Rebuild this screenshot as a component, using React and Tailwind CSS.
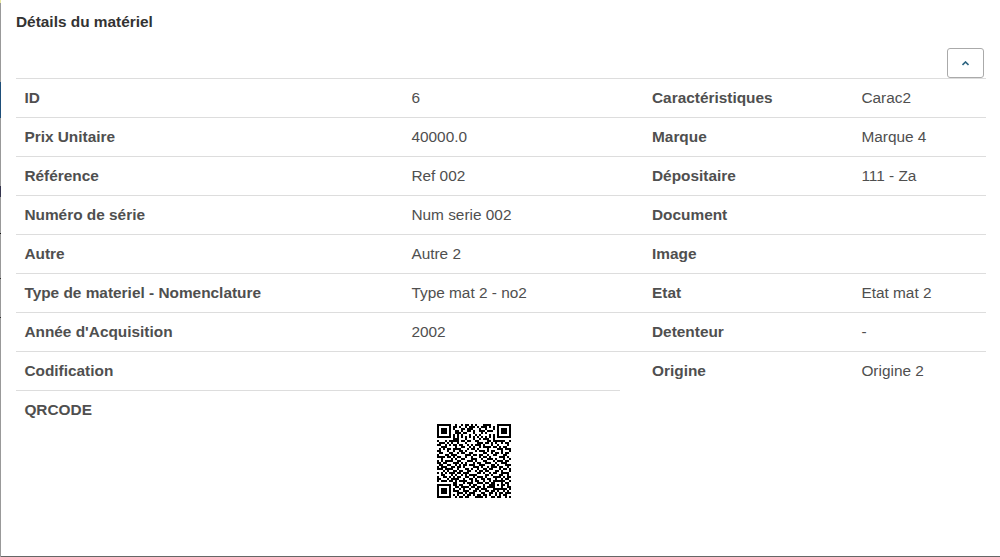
const details = [
  ['ID', '6'],
  ['Prix Unitaire', '40000.0'],
  ['Référence', 'Ref 002'],
  ['Numéro de série', 'Num serie 002'],
  ['Autre', 'Autre 2'],
  ['Type de materiel - Nomenclature', 'Type mat 2 - no2'],
  ["Année d'Acquisition", '2002'],
  ['Codification', ''],
];

const attributes = [
  ['Caractéristiques', 'Carac2'],
  ['Marque', 'Marque 4'],
  ['Dépositaire', '111 - Za'],
  ['Document', ''],
  ['Image', ''],
  ['Etat', 'Etat mat 2'],
  ['Detenteur', '-'],
  ['Origine', 'Origine 2'],
];

const modules = [
  '1111111001001011010100011110001111111',
  '1000001011010010111010111010101000001',
  '1011101010001101110001001000101011101',
  '1011101001101001101001110111001011101',
  '1011101001110110001000101000001011101',
  '1000001010101000100101000010101000001',
  '1111111010101010101010101010101111111',
  '0000000011100010001001011100100000000',
  '1000101111101101100110000110111111001',
  '0111010100100010000011101101010010110',
  '1100101011011001010111010001001000010',
  '0011100001001100101001011110110101100',
  '0101011011110001011010000100001110111',
  '1100010010011010000101110101100010001',
  '0110001100101100110000011001011010110',
  '1000110111000011101101100100110001100',
  '1111011010110010010001011010000111010',
  '0010000101001100011100100111010001001',
  '1010111100110001110100011000101110110',
  '1101100011101010001011001110010011100',
  '0110011001010110111001110001101000111',
  '1011100110110100001110100101110110010',
  '1110111100100011010010011011000101101',
  '0001010011011001100101101100011010001',
  '1010101110110111000011010010110011110',
  '0011000101001010111100001101000110010',
  '1001101010110011001011101000111101011',
  '1100010111100100110100110110010010110',
  '1011101101011110010110010010111111001',
  '0000000011000101110011101101100010110',
  '1111111011011000101100010011101011010',
  '1000001001101111011011010111100010011',
  '1011101010010100100110111000111111101',
  '1011101011100111001101001101101001010',
  '1011101000111010111000110011010110111',
  '1000001010100101101011011010010101100',
  '1111111001011011000111101001101100101',
];

function QrCode() {
  return (
    <svg width="74" height="74" viewBox="0 0 37 37" shapeRendering="crispEdges" role="img" aria-label="QRCODE">
      {modules.flatMap((row, y) =>
        [...row].map((bit, x) => (bit === '1' ? <rect key={`${x}-${y}`} x={x} y={y} width="1" height="1" /> : null))
      )}
    </svg>
  );
}

function Row({ label, value, columns }) {
  return (
    <div className={`grid h-[39px] border-t border-[#dddddd] pt-2 leading-[21px] ${columns}`}>
      <dt className="font-bold">{label}</dt>
      <dd>{value}</dd>
    </div>
  );
}

export default function App() {
  return (
    <div className="flex h-[557px] w-[1000px] overflow-hidden bg-white font-['Liberation_Sans',Arial,sans-serif] text-[15.4px] text-[#4f4f4f]">
      <div className="flex w-px shrink-0 flex-col bg-[#999999]">
        <div className="h-[3px] bg-[#e8e8a0]" />
        <div className="mt-[79px] h-9 bg-[#1e4e79]" />
        <div className="mt-[68px] h-[11px] bg-[#33334d]" />
        <div className="mt-[36px] h-px bg-[#111111]" />
        <div className="mt-[44px] h-px bg-[#333333]" />
        <div className="mt-[38px] h-px bg-[#333333]" />
      </div>
      <main className="flex min-w-0 flex-1 flex-col border-b border-[#666666] pl-[15px]">
        <h1 className="h-12 pt-3 leading-5 font-bold text-[#333333]">Détails du matériel</h1>
        <div className="flex h-[30px] justify-end pr-4">
          <button aria-label="Réduire" className="flex h-[30px] w-[37px] items-center justify-center rounded-[3px] border border-[#aaaaaa] bg-white">
            <svg width="7" height="5" viewBox="0 0 7 5" fill="none" stroke="#2d6480" strokeWidth="1.6">
              <path d="M.5 4 3.5 1l3 3" />
            </svg>
          </button>
        </div>
        <div className="flex">
          <dl className="w-[604px]">
            {details.map(([label, value]) => (
              <Row key={label} label={label} value={value} columns="grid-cols-[387px_1fr] pl-[8.4px]" />
            ))}
            <div className="grid grid-cols-[387px_1fr] border-t border-[#dddddd] pt-2 pl-[8.4px] leading-[21px]">
              <dt className="font-bold">QRCODE</dt>
              <dd className="pt-[25px] pl-[25.6px]"><QrCode /></dd>
            </div>
          </dl>
          <dl className="w-[366px]">
            {attributes.map(([label, value]) => (
              <Row key={label} label={label} value={value} columns="grid-cols-[209.4px_1fr] pl-8" />
            ))}
          </dl>
        </div>
      </main>
    </div>
  );
}
